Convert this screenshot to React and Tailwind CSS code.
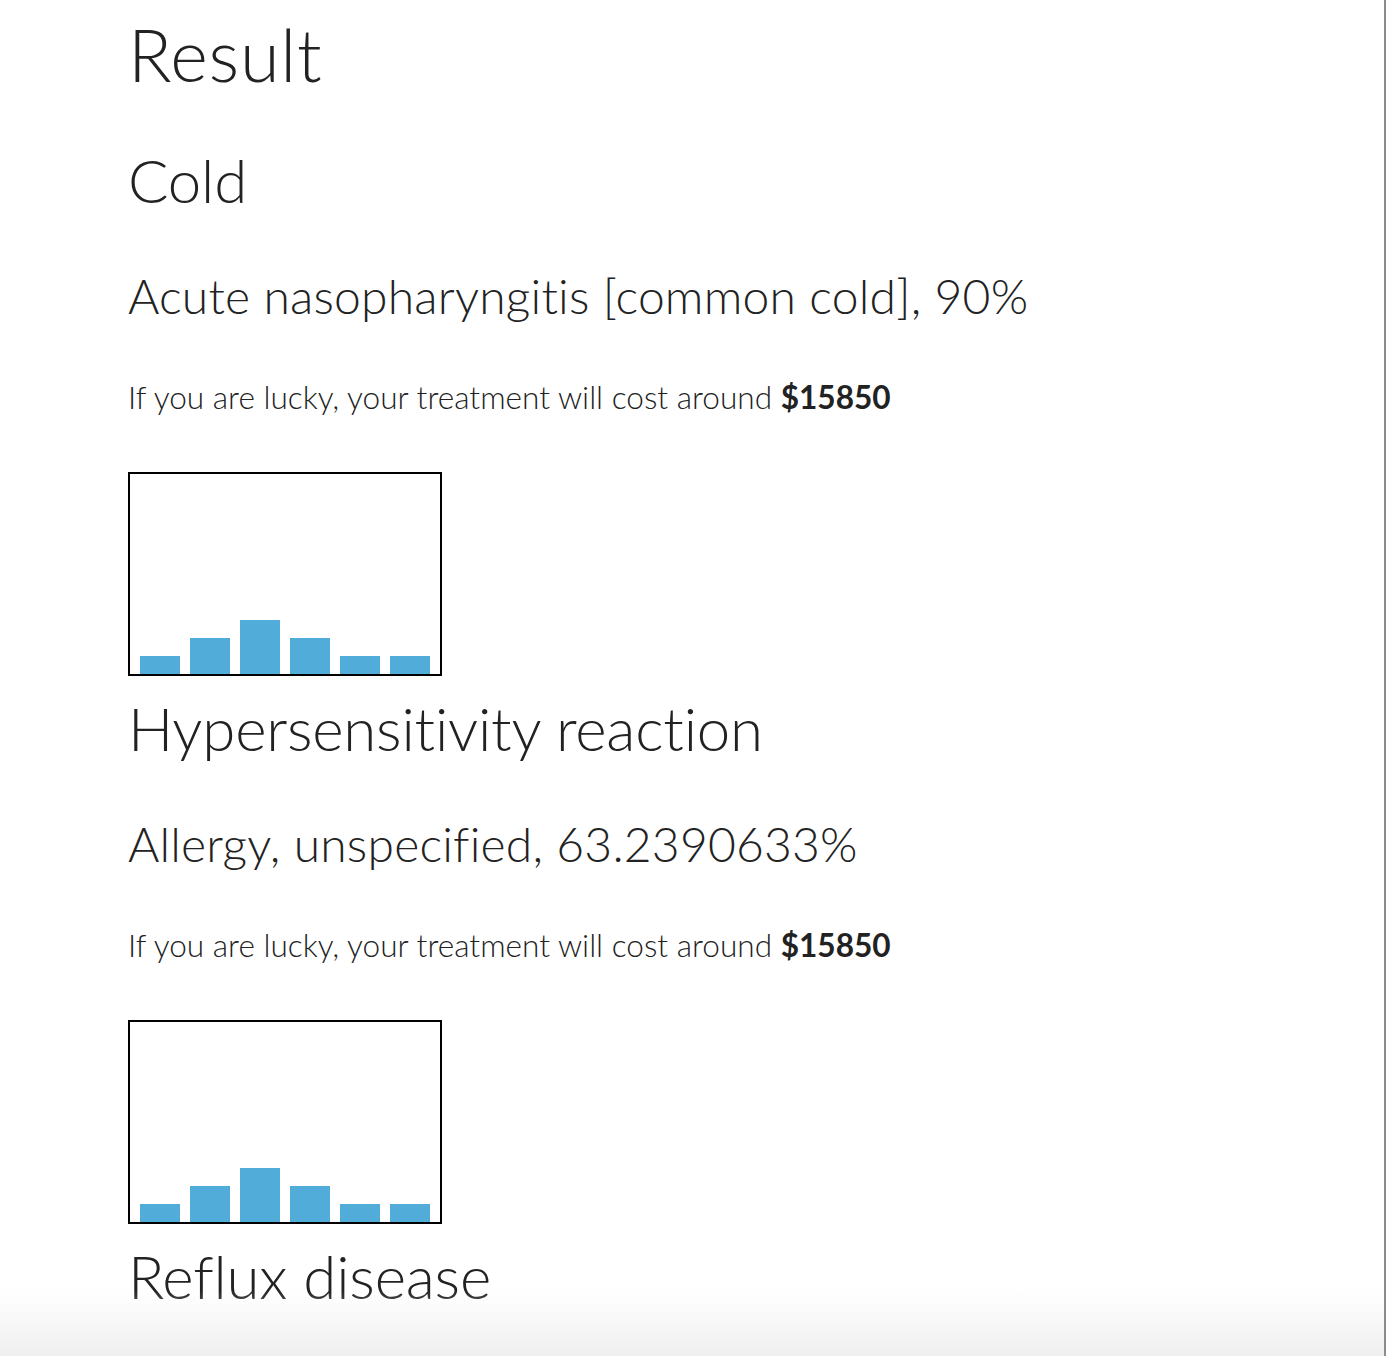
import React from 'react';

const results = [
  {
    name: 'Cold',
    diagnosis: 'Acute nasopharyngitis [common cold], 90%',
    cost: 15850,
    bars: [18, 36, 54, 36, 18, 18],
  },
  {
    name: 'Hypersensitivity reaction',
    diagnosis: 'Allergy, unspecified, 63.2390633%',
    cost: 15850,
    bars: [18, 36, 54, 36, 18, 18],
  },
  {
    name: 'Reflux disease',
    diagnosis: null,
    cost: null,
    bars: null,
  },
];

function CostChart({ bars }) {
  return (
    <div className="w-[314px] h-[204px] border-2 border-black flex items-end gap-[10px] px-[10px] bg-white">
      {bars.map((h, i) => (
        <div key={i} className="w-[40px] bg-[#52acd9]" style={{ height: h }} />
      ))}
    </div>
  );
}

function ResultBlock({ item, first }) {
  return (
    <div>
      <h2 className={`text-[60px] leading-none font-light tracking-[-0.2px] ${first ? 'mt-[60px]' : 'mt-[22px]'}`}>
        {item.name}
      </h2>
      {item.diagnosis && (
        <>
          <h3 className="text-[48px] leading-none font-light tracking-[0.2px] mt-[62px]">{item.diagnosis}</h3>
          <p className="text-[31.6px] leading-[32px] font-light mt-[61px]">
            If you are lucky, your treatment will cost around <b className="font-bold">${item.cost}</b>
          </p>
          <div className="mt-[59px]">
            <CostChart bars={item.bars} />
          </div>
        </>
      )}
    </div>
  );
}

export default function App() {
  return (
    <div className="min-h-screen w-[1386px] bg-white border-r-2 border-[#8c8c8c] text-[#222] overflow-hidden" style={{ fontFamily: 'Lato, "Open Sans", sans-serif' }}>
      <div className="pl-[128px] pb-[80px]">
        <h1 className="text-[72px] leading-none font-light tracking-[0.8px] mt-[18px]">Result</h1>
        {results.map((r, i) => (
          <ResultBlock key={r.name} item={r} first={i === 0} />
        ))}
      </div>

      {/* bottom fade from the browser frame */}
      <div className="fixed left-0 bottom-0 w-[1384px] h-[66px] bg-gradient-to-b from-white/0 to-[#efefef] pointer-events-none" />
    </div>
  );
}
